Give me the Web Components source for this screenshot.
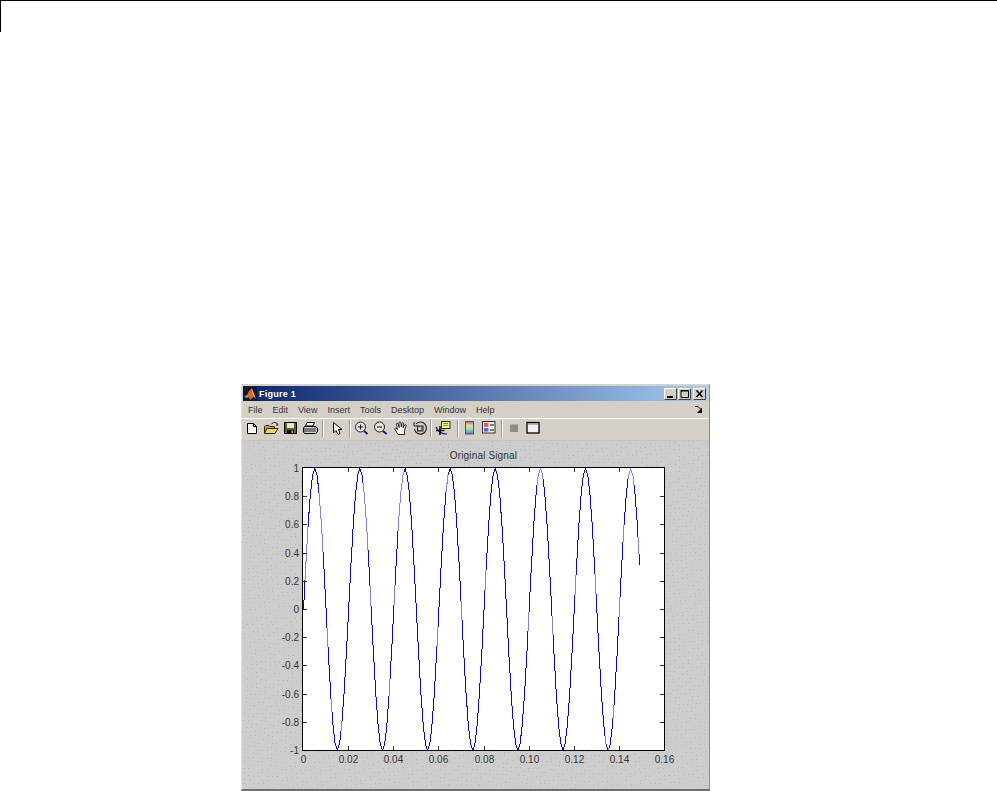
<!DOCTYPE html>
<html>
<head>
<meta charset="utf-8">
<title>Figure 1</title>
<style>
  html, body { margin: 0; padding: 0; background: #fff; }
  body { font-family: "Liberation Sans", Arial, sans-serif; height: 791px; overflow: hidden; }
</style>
</head>
<body>
<page-rule></page-rule>
<figure-window>
  <title-bar slot="title">Figure 1</title-bar>
  <menu-bar slot="menu">
    <span>File</span><span>Edit</span><span>View</span><span>Insert</span><span>Tools</span><span>Desktop</span><span>Window</span><span>Help</span>
  </menu-bar>
  <tool-bar slot="tools">
    <tool-icon name="new"></tool-icon>
    <tool-icon name="open"></tool-icon>
    <tool-icon name="save"></tool-icon>
    <tool-icon name="print"></tool-icon>
    <tool-sep style="--l:1.5px;--r:2px"></tool-sep>
    <tool-icon name="arrow"></tool-icon>
    <tool-sep style="--l:1px;--r:-1px"></tool-sep>
    <tool-icon name="zoomin"></tool-icon>
    <tool-icon name="zoomout"></tool-icon>
    <tool-icon name="hand"></tool-icon>
    <tool-icon name="rotate"></tool-icon>
    <tool-sep style="--l:-1px;--r:0px"></tool-sep>
    <tool-icon name="cursor"></tool-icon>
    <tool-sep style="--l:3px;--r:-1px"></tool-sep>
    <tool-icon name="colorbar"></tool-icon>
    <tool-icon name="legend"></tool-icon>
    <tool-sep style="--l:1.5px;--r:-.5px"></tool-sep>
    <tool-icon name="gray"></tool-icon>
    <tool-icon name="square"></tool-icon>
  </tool-bar>
  <signal-plot slot="plot"></signal-plot>
</figure-window>

<script>
class PageRule extends HTMLElement {
  constructor() {
    super();
    this.attachShadow({ mode: "open" }).innerHTML = `
      <style>
        :host { display: block; height: 384px; box-sizing: border-box; border-top: 1px solid #000; }
        div { width: 1px; height: 31px; background: #000; }
      </style>
      <div></div>
    `;
  }
}

class FigureWindow extends HTMLElement {
  constructor() {
    super();
    this.attachShadow({ mode: "open" }).innerHTML = `
      <style>
        :host {
          display: flex;
          flex-direction: column;
          box-sizing: border-box;
          width: 469px;
          height: 407px;
          margin-left: 241px;
          background: #d4d0c8;
          border-top: 1px solid #d8d4cc;
          border-left: 1px solid #e6e0d6;
          border-right: 1px solid #8f8d88;
          border-bottom: 2px solid #6e6e6e;
        }
      </style>
      <slot name="title"></slot>
      <slot name="menu"></slot>
      <slot name="tools"></slot>
      <slot name="plot"></slot>
    `;
  }
}

class TitleBar extends HTMLElement {
  constructor() {
    super();
    this.attachShadow({ mode: "open" }).innerHTML = `
      <style>
        :host {
          display: flex;
          align-items: center;
          height: 15px;
          margin: 1px 2px 0 1px;
          padding-right: 1px;
          background: linear-gradient(90deg, #0a246a, #a6caf0);
          color: #fff;
          font: bold 9px "Liberation Sans", Arial, sans-serif;
        }
        .logo { width: 14px; height: 14px; margin-right: 2px; display: block; flex: none; }
        .label { flex: 1; letter-spacing: .25px; }
        .btn {
          width: 13px; height: 12px; margin-left: 1px; display: block; flex: none;
        }
      </style>
      <svg class="logo" viewBox="0 0 14 14">
        <rect width="14" height="14" fill="#101830"/>
        <path d="M1 10 L4 8 L6 4 L9 1 L13 12 L10.500 9.500 L7.500 13 L5 9.500 Z" fill="#e8641a"/>
        <path d="M1 10 L4 8 L6 9.500 L4 11 Z" fill="#58a8d0"/>
        <path d="M8.500 2 L12.500 11 L10 8.500 Z" fill="#f8cc40"/>
      </svg>
      <span class="label"><slot></slot></span>
      <svg class="btn" viewBox="0 0 13 12">
        <rect width="13" height="12" fill="#d4d0c8"/>
        <path d="M.5 11.5V.5H12.5" fill="none" stroke="#fff"/><path d="M.5 11.5H12.5V.5" fill="none" stroke="#404040"/>
        <rect x="3" y="8" width="6" height="2" fill="#000"/>
      </svg>
      <svg class="btn" viewBox="0 0 13 12">
        <rect width="13" height="12" fill="#d4d0c8"/>
        <path d="M.5 11.5V.5H12.5" fill="none" stroke="#fff"/><path d="M.5 11.5H12.5V.5" fill="none" stroke="#404040"/>
        <path d="M3 2.5H10.5V9.5H3V2" fill="none" stroke="#000"/><path d="M3 3H10" stroke="#000"/>
      </svg>
      <svg class="btn" style="margin-left:2px" viewBox="0 0 13 12">
        <rect width="13" height="12" fill="#d4d0c8"/>
        <path d="M.5 11.5V.5H12.5" fill="none" stroke="#fff"/><path d="M.5 11.5H12.5V.5" fill="none" stroke="#404040"/>
        <path d="M3.5 2.5L9.5 9M9.5 2.5L3.5 9" fill="none" stroke="#000" stroke-width="1.6"/>
      </svg>
    `;
  }
}

class MenuBar extends HTMLElement {
  constructor() {
    super();
    this.attachShadow({ mode: "open" }).innerHTML = `
      <style>
        :host {
          display: flex;
          align-items: center;
          height: 18px;
          padding: 0 4px 0 6px;
          box-sizing: border-box;
          border-bottom: 1px solid #fff;
          font: 9px "Liberation Sans", Arial, sans-serif;
          color: #333;
        }
        .items { display: flex; flex: 1; }
        ::slotted(span) { margin-right: 10px; }
        svg { width: 9px; height: 9px; display: block; margin-right: 2px; }
      </style>
      <div class="items"><slot></slot></div>
      <svg viewBox="0 0 9 9"><path d="M1 1.5H4L7 4.5" fill="none" stroke="#000"/><path d="M8 2.5V8H3Z" fill="#000"/></svg>
    `;
  }
}

class ToolBar extends HTMLElement {
  constructor() {
    super();
    this.attachShadow({ mode: "open" }).innerHTML = `
      <style>
        :host {
          display: flex;
          align-items: center;
          gap: 3.5px;
          height: 22px;
          padding: 0 0 3px 1.5px;
          box-sizing: border-box;
          border-bottom: 1px solid #c8c5be;
        }
      </style>
      <slot></slot>
    `;
  }
}

class ToolSep extends HTMLElement {
  constructor() {
    super();
    this.attachShadow({ mode: "open" }).innerHTML = `
      <style>
        :host {
          display: block;
          width: 1px;
          height: 17px;
          background: #fff;
          box-shadow: -1px 0 0 #9c9a94;
          margin-left: var(--l, 0);
          margin-right: var(--r, 0);
        }
      </style>
    `;
  }
}

const TOOL_ICONS = {
  new: `<path d="M3.5 3.500H9.500L12.500 6.500V13.500H3.500Z" fill="#fff" stroke="#000"/><path d="M9.500 3.500V6.500H12.500" fill="none" stroke="#000"/>`,
  open: `<path d="M1.500 13.500V6.500L2.500 5.500H6L7 6.500H11.500V8.500" fill="#b8a038" stroke="#2c2c10"/>
         <path d="M1.500 13.500L4 8.500H15L12 13.500Z" fill="#e8d860" stroke="#2c2c10"/>
         <path d="M8.500 4L10.500 2.500H13L14.500 4.500" fill="none" stroke="#222"/><path d="M13 5.500H15.500L14.500 3Z" fill="#222"/>`,
  save: `<rect x="1.500" y="2.500" width="12" height="11" fill="#606028" stroke="#000"/>
         <rect x="4" y="3" width="7" height="5" fill="#e4e4d8"/><rect x="4" y="10" width="7" height="3.500" fill="#111"/><rect x="8.500" y="10.500" width="1.500" height="2.500" fill="#a8a878"/>`,
  print: `<path d="M5 2.500H12.500L11 6H3.500Z" fill="#fff" stroke="#000"/>
          <path d="M2.500 6.500H13.500L15.500 8V12L13.500 13.500H2.500L1.500 12V8Z" fill="#d0d0d0" stroke="#000"/>
          <path d="M2 9H14M2 11H14" stroke="#222"/><rect x="12" y="7.500" width="2" height="1" fill="#777"/>`,
  arrow: `<path d="M3.500 2.500V13L6 10.500L8 14.500L10 13.500L8.500 9.500H12Z" fill="#fff" stroke="#000"/>`,
  zoomin: `<circle cx="6.500" cy="7" r="5" fill="#e8e6e0" stroke="#222"/><path d="M4 7H9M6.500 4.500V9.500" stroke="#111"/><path d="M10 11L13.500 14" stroke="#0a1a90" stroke-width="2"/>`,
  zoomout: `<circle cx="6.500" cy="7" r="5" fill="#e8e6e0" stroke="#222"/><path d="M4 7H9" stroke="#111"/><path d="M10 11L13.500 14" stroke="#0a1a90" stroke-width="2"/>`,
  hand: `<path d="M5 14.500L2 9.500C1.500 8 3 7.500 4 9L4.500 9.500L3.500 4C3.500 3 5 3 5.200 4L6.200 7.500L6 2.800C6 1.700 7.700 1.700 7.800 2.800L8.300 7L9 3.300C9.200 2.300 10.800 2.500 10.600 3.700L10 7.800L11.600 5C12.200 4 13.500 4.600 13 5.800L11.500 10.500V14.500Z" fill="#fff" stroke="#111" stroke-width=".9"/>`,
  rotate: `<path d="M4 4A6 6 0 1 1 2.500 9" fill="none" stroke="#222" stroke-width="1.100"/><path d="M2 2V6H6" fill="none" stroke="#222"/>
           <rect x="5.500" y="6" width="5.500" height="5" fill="#888" stroke="#222"/><rect x="6.500" y="7" width="2" height="3" fill="#eee"/>`,
  cursor: `<path d="M1 7C3 12 7 14 12 14" fill="none" stroke="#1010a0" stroke-width="1.200"/>
           <path d="M5 6V15M1 10.500H9.500" stroke="#000" stroke-width="1.400"/>
           <rect x="6.500" y="1.500" width="8.500" height="7" fill="#f4f080" stroke="#333"/>
           <path d="M8.500 3.500H13M8.500 5.500H13" stroke="#8a8650"/>`,
  colorbar: `<rect x="4.500" y="1.500" width="8" height="12.500" fill="url(#bar)" stroke="#556"/>`,
  legend: `<rect x="1.500" y="1.500" width="12.500" height="11.500" fill="#efece6" stroke="#333"/>
           <rect x="3" y="3" width="4.500" height="4" fill="#e86060"/><rect x="3" y="8" width="4.500" height="3.500" fill="#6060d8"/>
           <path d="M9 5H13M9 10H13" stroke="#111"/>`,
  gray: `<rect x="4" y="4" width="8" height="8" fill="#8e8e8a"/><path d="M4 4.500H12" stroke="#a8a8a4"/>`,
  square: `<rect x="2" y="2.500" width="12" height="10.500" fill="#f2f2f2" stroke="#000" stroke-width="1.300"/><path d="M3 4H13" stroke="#777"/>`
};

class ToolIcon extends HTMLElement {
  connectedCallback() {
    const shadow = this.shadowRoot || this.attachShadow({ mode: "open" });
    shadow.innerHTML = `
      <style>
        :host { display: block; width: 16px; height: 16px; flex: none; }
        svg { display: block; width: 16px; height: 16px; overflow: visible; }
      </style>
      <svg viewBox="0 0 16 16">
        <defs>
          <linearGradient id="bar" x1="0" y1="0" x2="0" y2="1">
            <stop offset="0" stop-color="#a060a0"/><stop offset=".3" stop-color="#f0d890"/>
            <stop offset=".6" stop-color="#a0e0b0"/><stop offset="1" stop-color="#5080d0"/>
          </linearGradient>
        </defs>
        ${TOOL_ICONS[this.getAttribute("name")]}
      </svg>
    `;
  }
}

class SignalPlot extends HTMLElement {
  connectedCallback() {
    const shadow = this.shadowRoot || this.attachShadow({ mode: "open" });
    // svg coords: window-left 242, figure-top 441
    const L = 61, T = 27, R = 422, B = 309;
    const sx = (R - L) / 0.16, sy = (B - T) / 2;
    const px = (v) => L + v * sx;
    const py = (v) => T + (1 - v) * sy;

    // dither speckle of the figure background
    let dots = "";
    for (let y = 1; y < 348; y += 3.7) {
      for (let x = 1; x < 466; x += 4.6) {
        const w = Math.sin(y / 30 + x / 60) * 4;
        const xx = Math.round(x + w);
        const yy = Math.round(y + Math.sin(x / 45) * 2);
        if (Math.sin(x * 1.7 + y * 2.3) > -0.2) dots += "M" + xx + " " + yy + "h1v1h-1z";
      }
    }

    // axis box and ticks
    let ticks = "", labels = "";
    for (let i = 0; i <= 8; i++) {
      const x = Math.round(px(i * 0.02));
      if (i > 0 && i < 8) ticks += `M${x + .5} ${B}v-4M${x + .5} ${T}v4`;
      const t = i === 0 ? "0" : (i * 0.02).toFixed(2);
      labels += `<text x="${x + .5}" y="${B + 13}" text-anchor="middle">${t}</text>`;
    }
    for (let i = -5; i <= 5; i++) {
      const v = i / 5;
      const y = Math.round(py(v));
      if (i > -5 && i < 5) ticks += `M${L} ${y + .5}h4M${R} ${y + .5}h-4`;
      const t = Number.isInteger(v) ? String(v) : v.toFixed(1);
      labels += `<text x="${L - 4}" y="${y + 4}" text-anchor="end">${t}</text>`;
    }

    // the signal, drawn pixel by pixel so it stays aliased
    const isLight = (col) => LIGHT_COLS.has(col + 242);
    let dark = "", light = "";
    const plot = (c, r) => {
      const d = `M${c} ${r}h1v1h-1z`;
      if (isLight(c)) light += d; else dark += d;
    };
    let prev = null;
    for (let k = 0; k < 150; k++) {
      const t = k * 0.001;
      const p = [px(t), py(Math.sin(2 * Math.PI * 50 * t))];
      if (prev) {
        const steps = Math.ceil(Math.max(Math.abs(p[0] - prev[0]), Math.abs(p[1] - prev[1])));
        for (let s = 0; s < steps; s++) {
          const f = s / steps;
          plot(Math.round(prev[0] + (p[0] - prev[0]) * f), Math.round(prev[1] + (p[1] - prev[1]) * f));
        }
      }
      prev = p;
    }

    shadow.innerHTML = `
      <style>
        :host { display: block; flex: 1; min-height: 0; background: #cdcdcd; }
        svg { display: block; width: 100%; height: 100%; }
        text { font: 10px "Liberation Sans", Arial, sans-serif; fill: #333; }
      </style>
      <svg viewBox="0 0 467 348" preserveAspectRatio="xMinYMin">
        <path d="${dots}" fill="#b6b6b6"/>
        <rect x="${L}" y="${T}" width="${R - L}" height="${B - T}" fill="#fff"/>
        <path d="${light}" fill="#8080ff"/>
        <path d="${dark}" fill="#0000ff"/>
        <path d="${ticks}" stroke="#333" fill="none"/>
        <rect x="${L - .5}" y="${T - .5}" width="${R - L + 1}" height="${B - T + 1}" fill="none" stroke="#000"/>
        ${labels}
        <text x="${(L + R) / 2}" y="${T - 9}" text-anchor="middle" letter-spacing=".15">Original Signal</text>
      </svg>
    `;
  }
}

const LIGHT_COLS = new Set([305,306,307,319,320,321,322,327,331,341,363,364,365,366,367,370,389,394,398,399,400,401,402,403,437,446,447,461,485,528,537,538,539,540,541,542,552,575,595,605,608,613,619,623,628,629,630,631,632,633,638]);

customElements.define("page-rule", PageRule);
customElements.define("figure-window", FigureWindow);
customElements.define("title-bar", TitleBar);
customElements.define("menu-bar", MenuBar);
customElements.define("tool-bar", ToolBar);
customElements.define("tool-sep", ToolSep);
customElements.define("tool-icon", ToolIcon);
customElements.define("signal-plot", SignalPlot);
</script>
</body>
</html>
